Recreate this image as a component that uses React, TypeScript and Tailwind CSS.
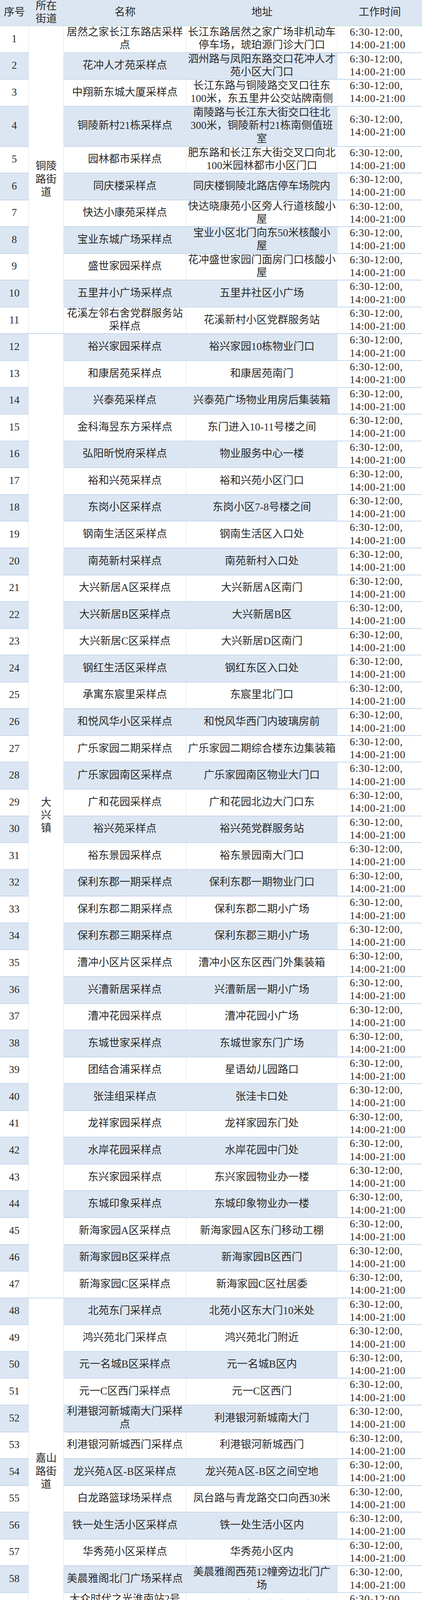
import React from "react";

type Row = [string, string];

const ROWS: Row[] = [
  ["居然之家长江东路店采样|点", "长江东路居然之家广场非机动车|停车场，琥珀源门诊大门口"],
  ["花冲人才苑采样点", "泗州路与凤阳东路交口花冲人才|苑小区大门口"],
  ["中翔新东城大厦采样点", "长江东路与铜陵路交叉口往东|100米，东五里井公交站牌南侧"],
  ["铜陵新村21栋采样点", "南陵路与长江东大街交口往北|300米，铜陵新村21栋南侧值班|室"],
  ["园林都市采样点", "肥东路和长江东大街交叉口向北|100米园林都市小区门口"],
  ["同庆楼采样点", "同庆楼铜陵北路店停车场院内"],
  ["快达小康苑采样点", "快达晓康苑小区旁人行道核酸小|屋"],
  ["宝业东城广场采样点", "宝业小区北门向东50米核酸小|屋"],
  ["盛世家园采样点", "花冲盛世家园门面房门口核酸小|屋"],
  ["五里井小广场采样点", "五里井社区小广场"],
  ["花溪左邻右舍党群服务站|采样点", "花溪新村小区党群服务站"],
  ["裕兴家园采样点", "裕兴家园10栋物业门口"],
  ["和康居苑采样点", "和康居苑南门"],
  ["兴泰苑采样点", "兴泰苑广场物业用房后集装箱"],
  ["金科海昱东方采样点", "东门进入10-11号楼之间"],
  ["弘阳昕悦府采样点", "物业服务中心一楼"],
  ["裕和兴苑采样点", "裕和兴苑小区门口"],
  ["东岗小区采样点", "东岗小区7-8号楼之间"],
  ["钢南生活区采样点", "钢南生活区入口处"],
  ["南苑新村采样点", "南苑新村入口处"],
  ["大兴新居A区采样点", "大兴新居A区南门"],
  ["大兴新居B区采样点", "大兴新居B区"],
  ["大兴新居C区采样点", "大兴新居D区南门"],
  ["钢红生活区采样点", "钢红东区入口处"],
  ["承寓东宸里采样点", "东宸里北门口"],
  ["和悦风华小区采样点", "和悦风华西门内玻璃房前"],
  ["广乐家园二期采样点", "广乐家园二期综合楼东边集装箱"],
  ["广乐家园南区采样点", "广乐家园南区物业大门口"],
  ["广和花园采样点", "广和花园北边大门口东"],
  ["裕兴苑采样点", "裕兴苑党群服务站"],
  ["裕东景园采样点", "裕东景园南大门口"],
  ["保利东郡一期采样点", "保利东郡一期物业门口"],
  ["保利东郡二期采样点", "保利东郡二期小广场"],
  ["保利东郡三期采样点", "保利东郡三期小广场"],
  ["漕冲小区片区采样点", "漕冲小区东区西门外集装箱"],
  ["兴漕新居采样点", "兴漕新居一期小广场"],
  ["漕冲花园采样点", "漕冲花园小广场"],
  ["东城世家采样点", "东城世家东门广场"],
  ["团结合浦采样点", "星语幼儿园路口"],
  ["张洼组采样点", "张洼卡口处"],
  ["龙祥家园采样点", "龙祥家园东门处"],
  ["水岸花园采样点", "水岸花园中门处"],
  ["东兴家园采样点", "东兴家园物业办一楼"],
  ["东城印象采样点", "东城印象物业办一楼"],
  ["新海家园A区采样点", "新海家园A区东门移动工棚"],
  ["新海家园B区采样点", "新海家园B区西门"],
  ["新海家园C区采样点", "新海家园C区社居委"],
  ["北苑东门采样点", "北苑小区东大门10米处"],
  ["鸿兴苑北门采样点", "鸿兴苑北门附近"],
  ["元一名城B区采样点", "元一名城B区内"],
  ["元一C区西门采样点", "元一C区西门"],
  ["利港银河新城南大门采样|点", "利港银河新城南大门"],
  ["利港银河新城西门采样点", "利港银河新城西门"],
  ["龙兴苑A区-B区采样点", "龙兴苑A区-B区之间空地"],
  ["白龙路篮球场采样点", "凤台路与青龙路交口向西30米"],
  ["铁一处生活小区采样点", "铁一处生活小区内"],
  ["华秀苑小区采样点", "华秀苑小区内"],
  ["美晨雅阁北门广场采样点", "美晨雅阁西苑12幢旁边北门广|场"],
  ["大众时代之光淮南站2号|地铁口采样点", "大众时代之光淮南站2号地铁口"],
  ["蓝光商业街采样点", "蓝光商业街S1幢旁"],
  ["惠风大厦核酸检测点", "惠风大厦楼下（刀板香门口）"],
  ["金色地带核酸检测点", "蓝鲸大厦西侧（生鲜传奇门口）"],
  ["天骄国际核酸检测点", "天骄国际a座门口岗亭"],
  ["宝文广场采样点", "宝文国际大厦一楼大厅"],
  ["七里香榭采样点", "七里香榭6#架空层"],
  ["天目未来采样点", "天目未来8#地下车库"],
  ["临泉花苑采样点", "临泉花苑5#2单元门口"],
];

const GROUPS: { start: number; span: string; label: string[] }[] = [
  { start: 1, span: "row-span-11", label: ["铜陵", "路街", "道"] },
  { start: 12, span: "row-span-36", label: ["大", "兴", "镇"] },
  { start: 48, span: "row-span-13", label: ["嘉山", "路街", "道"] },
  { start: 61, span: "row-span-7", label: [] },
];

function Line({ children }: { children: React.ReactNode }) {
  return (
    <div className="h-[33.3px] leading-[31px] whitespace-nowrap">{children}</div>
  );
}

function Lines({ text }: { text: string }) {
  return (
    <>
      {text.split("|").map((l, i) => (
        <Line key={i}>{l}</Line>
      ))}
    </>
  );
}

export default function App() {
  const head =
    "h-[67px] bg-[#dce6f2] border-b-2 border-b-[#c8e2dc] flex flex-col items-center justify-center";
  return (
    <div className="w-[1080px] bg-white text-[27px] text-[#2a2a2a] font-['Liberation_Serif','Noto_Sans_CJK_SC',serif]">
      <div className="grid grid-cols-[74px_89px_314px_387px_216px]">
        <div className={`${head} col-start-1`}>
          <Line>序号</Line>
        </div>
        <div className={`${head} col-start-2`}>
          <div className="h-[32.5px] leading-[31px]">所在</div>
          <div className="h-[32.5px] leading-[31px]">街道</div>
        </div>
        <div className={`${head} col-start-3`}>
          <Line>名称</Line>
        </div>
        <div className={`${head} col-start-4`}>
          <Line>地址</Line>
        </div>
        <div className={`${head} col-start-5`}>
          <Line>工作时间</Line>
        </div>

        {ROWS.map(([name, addr], idx) => {
          const n = idx + 1;
          const blue = n % 2 === 0;
          const group = GROUPS.find((g) => g.start === n);
          const h = n === 4 ? "h-[102.84px]" : "h-[68.57px]";
          const fill = blue
            ? "bg-[#dce6f2] border-r-[#dce6f2]"
            : "bg-white border-r-[#e4e4e4]";
          const base = `${h} flex flex-col justify-center border-b-2 border-b-[#c4d7ee] border-r`;
          return (
            <React.Fragment key={n}>
              <div className={`${base} ${fill} col-start-1 items-center`}>
                <Line>{n}</Line>
              </div>
              {group && (
                <div
                  className={`${group.span} col-start-2 flex flex-col items-center justify-center bg-white border-b-2 border-b-[#c4d7ee] border-r border-r-[#e4e4e4]`}
                >
                  {group.label.map((l, i) => (
                    <Line key={i}>{l}</Line>
                  ))}
                </div>
              )}
              <div className={`${base} ${fill} col-start-3 items-center`}>
                <Lines text={name} />
              </div>
              <div className={`${base} ${fill} col-start-4 items-center`}>
                <Lines text={addr} />
              </div>
              <div
                className={`${base} bg-white border-r-white col-start-5 items-start pl-[31px] tracking-[1px]`}
              >
                <Line>6:30-12:00,</Line>
                <Line>14:00-21:00</Line>
              </div>
            </React.Fragment>
          );
        })}
      </div>
    </div>
  );
}
